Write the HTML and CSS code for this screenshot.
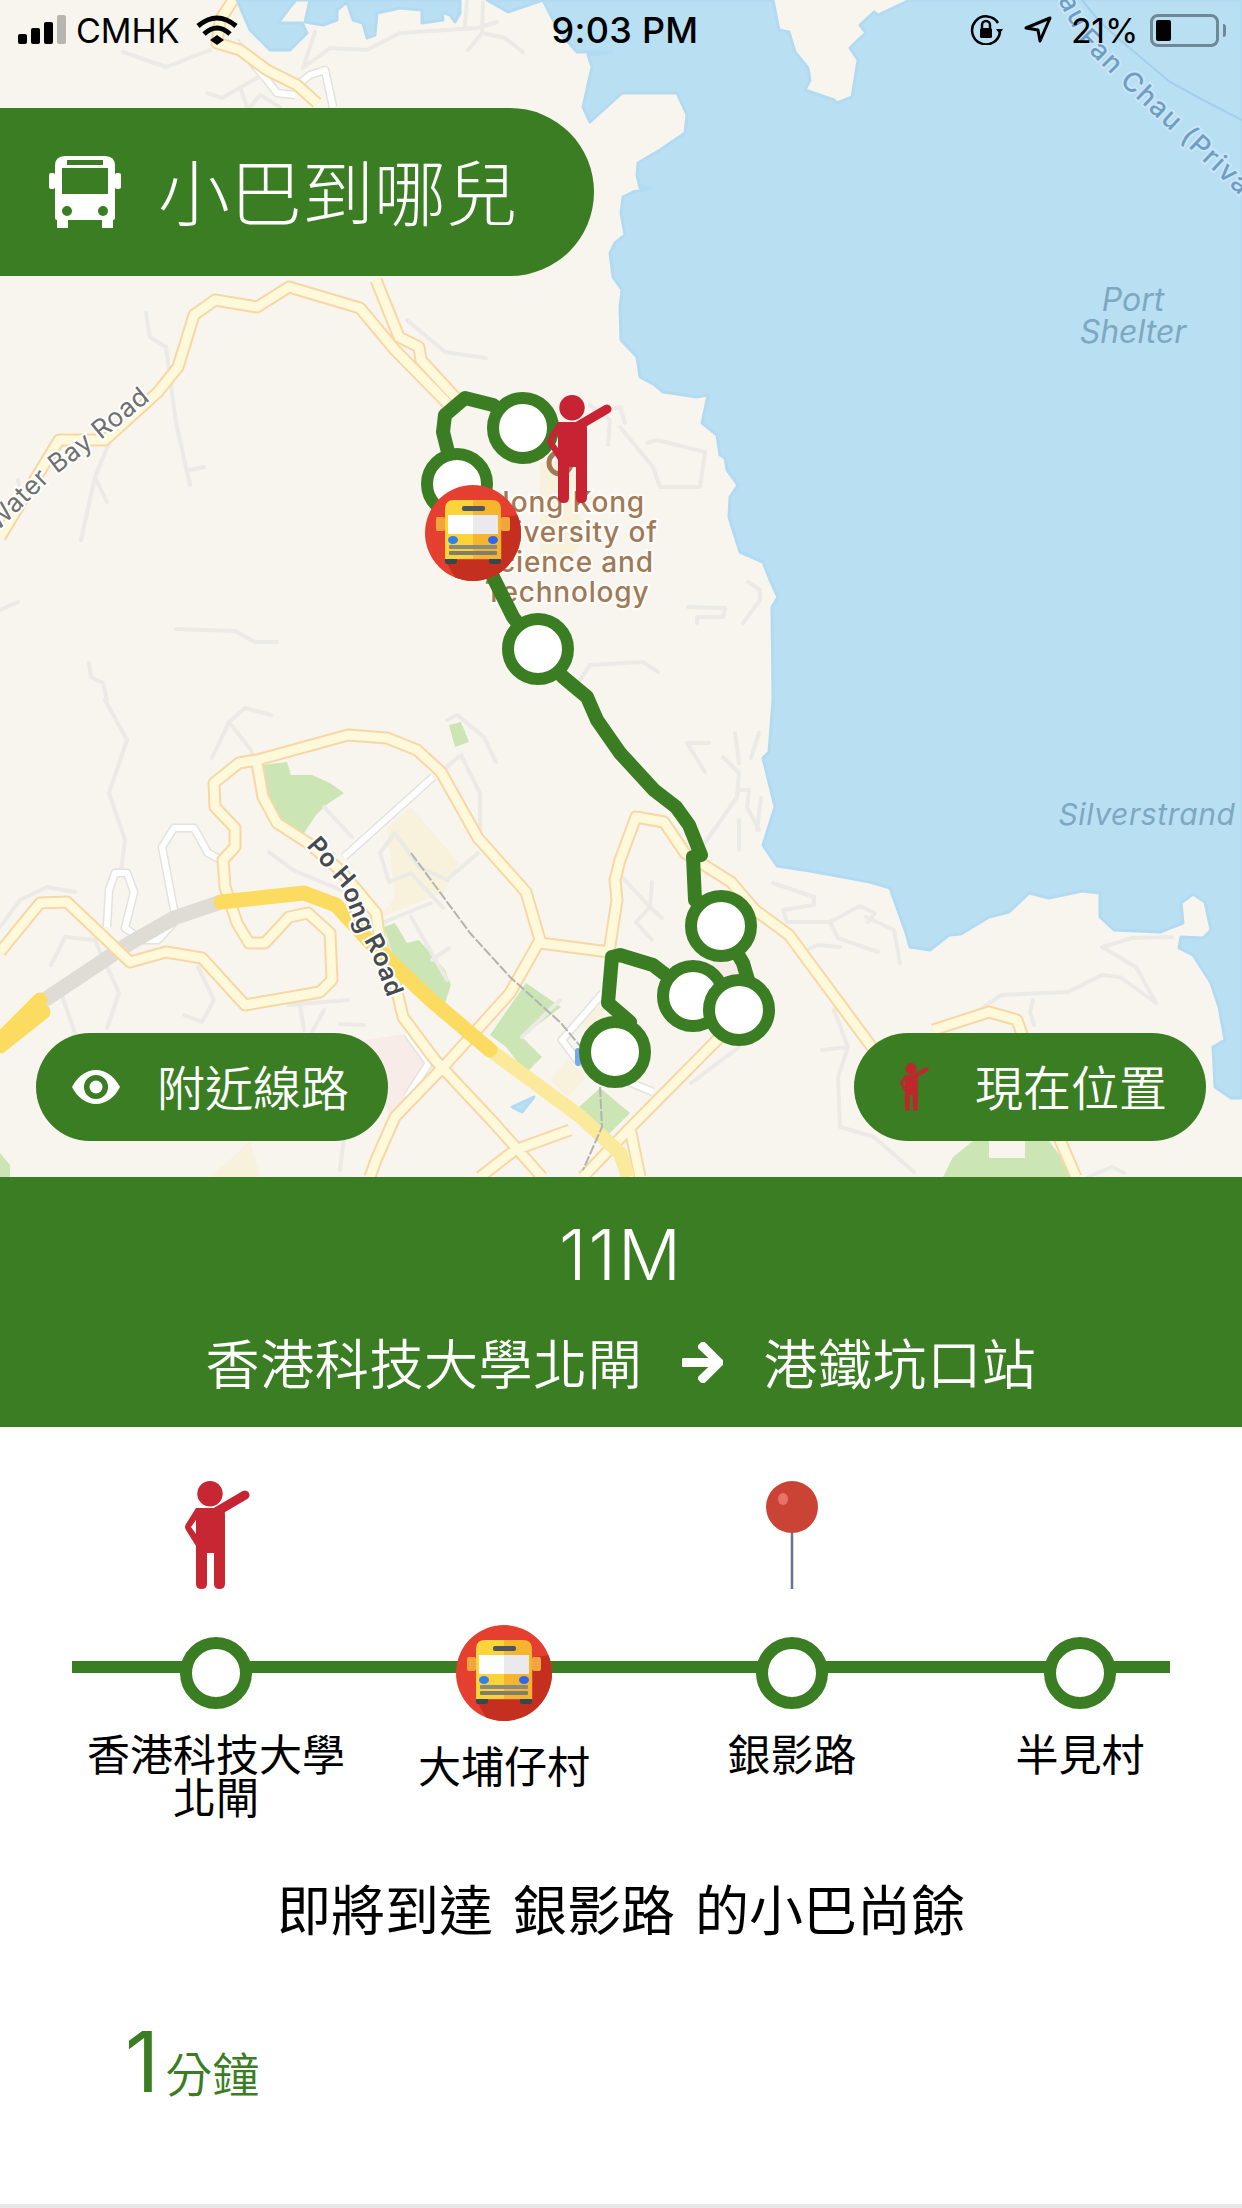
FILE: index.html
```html
<!DOCTYPE html>
<html lang="zh-Hant">
<head>
<meta charset="utf-8">
<title>小巴到哪兒</title>
<link rel="stylesheet" href="styles.css">
</head>
<body>
<svg class="defs" width="0" height="0" aria-hidden="true">
  <defs>
    <symbol id="person" viewBox="0 0 67 108">
      <circle cx="27" cy="12.7" r="12.7"/>
      <path d="M33 31 62 14" class="person-arm"/>
      <path fill-rule="evenodd" d="M13 27H39Q42 28 42 34V103Q42 108 36.500 108 31 108 31 103V72H24V103Q24 108 18.500 108 13 108 13 103V65L3 49Q1 46 3 43ZM13 39 8 46 13 53Z"/>
    </symbol>
    <clipPath id="bus-disc"><circle cx="48" cy="48" r="48"/></clipPath>
    <symbol id="bus" viewBox="0 0 96 96">
      <g clip-path="url(#bus-disc)">
        <rect width="96" height="96" fill="#e53f30"/>
        <path d="M48 75H77V32L96 30V96H32L20 75Z" fill="#c42f1f"/>
      </g>
      <rect x="11" y="32" width="9" height="14" rx="2" fill="#f2a53c"/>
      <rect x="76" y="32" width="9" height="14" rx="2" fill="#f2a53c"/>
      <rect x="20" y="71" width="12" height="8" rx="2" fill="#37474f"/>
      <rect x="64" y="71" width="12" height="8" rx="2" fill="#37474f"/>
      <path d="M20 24Q20 15 29 15H48V74H20Z" fill="#fbd43a"/>
      <path d="M76 24Q76 15 67 15H48V74H76Z" fill="#f5b52f"/>
      <rect x="37" y="21" width="23" height="5" rx="2" fill="#4d5560"/>
      <rect x="23" y="30" width="25" height="19" fill="#fff"/>
      <rect x="48" y="30" width="25" height="19" fill="#e9e9ee"/>
      <ellipse cx="28" cy="55" rx="5" ry="4" fill="#2f80ed"/>
      <ellipse cx="68" cy="55" rx="5" ry="4" fill="#2f66ed"/>
      <rect x="24" y="60" width="48" height="4" rx="1" fill="#8b8b7c"/>
      <rect x="24" y="66" width="48" height="4" rx="1" fill="#7d7d70"/>
    </symbol>
    <path id="white-roads" d="M221 860 208 853 194 828 174 828 162 847 176 920 158 940 142 940 125 928 134 892 127 873 115 873 109 890 107 927M433 777 344 857M407 1033 429 1063 407 1097M603 993 562 1040 577 1060 653 1092M235 42 267 80 277 93 295 95M300 83 310 75 325 70 333 107"/>
    <path id="roads" d="M0 952 40 903 67 902 130 962 166 952 202 958 245 1005 320 992 332 980 330 933 308 913 289 917 265 943 249 943 237 923 225 887 223 860 235 847 235 828 215 807 214 783 239 763 257 760 348 735 387 738 417 750 441 772 478 838 526 892 540 940 510 993 447 1063 395 1117 376 1160 370 1177M257 763 263 797 277 823 308 843 340 870 376 913 380 940 395 983 403 1017 435 1060 494 1123 542 1177M540 943 609 952 617 900 615 880 620 860 636 817 664 822 685 853 731 882 755 910 789 935 874 1050M933 1030 989 1012 1017 1020 1057 1133 1076 1177M583 1177 630 1128 720 1037M630 1128 640 1177M0 537 59 440 105 440 158 392 178 367 194 315 215 300 257 307 289 287 360 308 395 350 447 403M376 280 399 337 419 347 421 360 455 397M317 103 297 85 267 70 240 50 217 43 220 20 233 0M480 1177 515 1150 570 1130"/>
  </defs>
</svg>

<main class="app">
  <section class="map">
    <svg class="map-art" viewBox="0 0 1242 1177" width="1242" height="1177" role="img" aria-label="路線地圖">
      <rect class="land" width="1242" height="1177"/>
      <g class="water">
        <path d="M237 0 250 30 270 50 290 50 307 33 302 23 278 23 290 7 296 0 310 0 305 22 323 25 337 20 337 10 347 2 353 20 363 23 367 38 375 35 377 13 400 8 422 10 422 23 443 20 442 12 450 15 455 22 460 13 460 0Z"/>
        <path d="M487 0 508 12 543 0Z"/>
        <path d="M543 0 560 33 577 52 612 52 588 55 592 67 583 107 590 122 622 93 677 93 687 115 685 133 660 150 638 163 637 175 640 188 652 188 633 192 623 197 621 213 625 235 615 243 610 253 613 277 622 290 620 307 621 340 637 357 640 377 655 385 663 392 697 397 708 395 702 423 717 435 720 455 725 458 727 470 738 485 730 497 729 517 740 552 763 562 770 580 778 597 772 607 773 700 769 752 763 758 775 807 763 845 777 866 810 871 870 882 890 888 906 933 910 947 930 950 949 935 961 934 989 917 1009 912 1029 893 1049 898 1082 891 1100 893 1100 917 1114 930 1160 932 1183 923 1181 903 1193 894 1205 902 1211 930 1203 938 1181 937 1179 948 1193 955 1211 983 1219 1007 1225 1040 1213 1047 1215 1087 1231 1098 1242 1098 1242 0 910 0 878 15 874 12 860 25 866 33 858 40 850 48 858 60 852 97 837 103 834 100 805 90 810 80 808 68 795 52 789 32 779 30 773 0Z"/>
        <path d="M512 1107 534 1097 522 1112Z"/>
        <path d="M608 1110 617 1112 613 1120 608 1120Z"/>
      </g>
      <path class="water-line" d="M1082 0 1100 22 1120 40 1170 82 1203 100 1242 120"/>
      <g class="park">
        <path d="M263 765 287 762 291 775 312 775 330 783 344 793 326 805 316 815 304 833 277 820 263 797Z"/>
        <path d="M449 725 461 722 469 742 455 747Z"/>
        <path d="M384 927 395 923 407 943 419 940 445 970 451 985 445 1003 431 1002 395 963Z"/>
        <path d="M526 983 561 1007 522 1037 542 1057 526 1073 506 1047 490 1035Z"/>
        <path d="M578 1108 600 1088 630 1113 608 1135Z"/>
        <path d="M0 1153 10 1165 10 1177 0 1177Z"/>
        <path d="M943 1177 953 1157 973 1141 989 1141 989 1158 1025 1158 1025 1141 1049 1141 1076 1177Z"/>
        <path d="M674 1003 695 1020 680 1030 666 1015Z"/>
      </g>
      <g class="campus">
        <path d="M411 807 459 863 443 893 380 917 395 897 387 828Z"/>
        <path d="M550 1080 568 1060 587 1077 568 1097Z"/>
        <path d="M583 1020 598 1007 620 1030 590 1050Z"/>
        <path d="M540 462 578 462 582 540 560 575 540 555Z"/>
        <path d="M210 1177 235 1155 250 1140 260 1177Z"/>
      </g>
      <path class="hospital" d="M364 1040 411 1033 427 1060 395 1120 380 1100Z"/>
      <path class="hospital" d="M715 960 745 965 735 985 705 975Z"/>
      <g class="path-minor">
        <path d="M105 700 127 740 109 793 125 840 121 870"/>
        <path d="M271 715 245 708 229 722 251 750 253 758M229 722 212 758"/>
        <path d="M0 927 20 900 47 887 75 892"/>
        <path d="M51 965 65 937 95 940 119 993 107 1028M73 977 61 993 75 1033"/>
        <path d="M198 967 214 1000 202 1022 184 1015"/>
        <path d="M289 1005 348 1000M300 1005 304 1030M324 1010 312 1032M340 1024 364 1025"/>
        <path d="M269 852 293 870 348 893M324 807 352 837"/>
        <path d="M447 720 457 715 484 737 496 762M443 770 461 755 480 793 480 833"/>
        <path d="M380 853 395 833 419 867 447 880 478 853M380 853 389 882 411 873 443 908"/>
        <path d="M382 923 431 903M411 917 447 980M449 948 432 960"/>
        <path d="M146 313 150 337 166 347 176 423 190 485M190 470 204 467"/>
        <path d="M18 480 22 505M81 540 95 477 109 443M95 477 107 502M0 610 18 602"/>
        <path d="M176 629 235 631 255 642 277 642"/>
        <path d="M89 663 91 677 103 683 107 700"/>
        <path d="M407 320 445 352 486 358"/>
        <path d="M610 410 620 407 625 423M590 405 610 420 608 445M620 427 653 467 660 487 700 487 705 452 697 450 657 440 647 443"/>
        <path d="M580 680 590 665 643 662 658 672"/>
        <path d="M688 607 725 608 723 617 697 617 697 623M748 582 760 590 760 600 743 623"/>
        <path d="M705 772 687 743 709 743M723 757 739 773 737 797 705 843M759 733 751 758M735 733 739 763M741 790 749 790 747 807 759 830M761 798 757 830M739 820 739 850"/>
        <path d="M622 877 650 907 662 918M652 882 650 907 636 922 652 940"/>
        <path d="M773 883 814 897 814 905 783 910 787 922 830 922 838 938 878 952M830 922 860 906 875 913 868 922M866 917 894 930 900 963M806 950 818 945 840 947"/>
        <path d="M822 1050 848 1047 838 1077 840 1127 874 1137 914 1172M834 1010 848 1047"/>
        <path d="M691 1083 739 1047M692 1060 720 1035"/>
        <path d="M977 1012 1001 995 1068 992 1102 975 1120 977 1156 1003 1136 967 1102 947 1132 938 1172 937"/>
        <path d="M1033 1000 1030 1012 1034 1025"/>
        <path d="M1088 1177 1112 1167 1124 1173"/>
        <path d="M315 32 303 68 330 48 367 50 400 33 477 28 497 22M467 0 465 27M483 3 482 33 468 50M482 33 505 38 523 52"/>
        <path d="M207 93 222 98 257 78M240 87 247 107M250 107 260 95 280 107"/>
        <path d="M123 52 166 67 210 50"/>
        <path d="M340 1170 345 1130"/>
        <path d="M522 1037 560 1000M617 1015 640 1040"/>
      </g>
      <use href="#white-roads" class="path-white-casing"/>
      <use href="#white-roads" class="path-white"/>
      <path class="expressway" d="M221 902 174 918 130 943 40 1003"/>
      <use href="#roads" class="road-casing"/>
      <use href="#roads" class="road-fill"/>
      <path class="highway-pale" d="M490 1050 581 1117 620 1153 628 1177"/>
      <path class="highway" d="M221 902 304 893 336 905 368 940 399 970 431 1000 490 1050"/>
      <path class="highway" d="M0 1040 40 1000M0 1046 43 1012"/>
      <path class="rail" d="M411 853 470 933 510 977 561 1023 600 1070M600 1087 602 1127 583 1170"/>
      <rect class="bus-stop-mark" x="575" y="1048" width="6" height="18" rx="3"/>

      <g class="label-water-small">
        <text class="label-port" x="1133" y="311">Port</text>
        <text class="label-port" x="1133" y="343">Shelter</text>
        <text class="label-silver" x="1147" y="825">Silverstrand</text>
      </g>
      <path id="chau-line" class="guide" d="M1050 -15 1082 45 1122 85 1252 207"/>
      <text class="label-chau"><textPath href="#chau-line">Tau Fan Chau (Private</textPath></text>
      <path id="water-bay-line" class="guide" d="M-3 532 52 478 95 445 160 392"/>
      <text class="label-road"><textPath href="#water-bay-line">Water Bay Road</textPath></text>
      <path id="po-hong-line" class="guide" d="M306 846 340 885 358 930 372 955 390 1004"/>
      <text class="label-road-strong"><textPath href="#po-hong-line">Po Hong Road</textPath></text>
      <circle class="campus-mark" cx="560" cy="463" r="11"/>
      <g class="label-campus">
        <text x="567" y="512">Hong Kong</text>
        <text x="567" y="542">University of</text>
        <text x="567" y="572">Science and</text>
        <text x="567" y="602">Technology</text>
      </g>

      <path class="route" d="M523 428 493 405 465 398 445 415 443 432 448 452 457 484 473 533 493 577 513 617 538 649 563 677 587 697 597 720 620 753 654 790 676 807 689 825 701 855 693 857 695 900 721 926 743 963 748 980 739 1010 693 996 653 965 620 955 612 957 608 1003 630 1022 615 1052"/>
      <circle class="marker" cx="523" cy="428" r="30"/>
      <circle class="marker" cx="457" cy="484" r="30"/>
      <circle class="marker" cx="538" cy="649" r="30"/>
      <circle class="marker" cx="721" cy="926" r="30"/>
      <circle class="marker" cx="693" cy="996" r="30"/>
      <circle class="marker" cx="739" cy="1010" r="30"/>
      <circle class="marker" cx="615" cy="1052" r="30"/>
      <use href="#person" class="person-map" x="545" y="395" width="67" height="108"/>
      <use href="#bus" x="425" y="485" width="96" height="96"/>
    </svg>

    <div class="status">
      <div class="status-left">
        <svg class="signal" viewBox="0 0 48 30" width="48" height="30" aria-hidden="true">
          <rect x="0" y="19" width="9" height="10" rx="2"/>
          <rect x="13" y="13" width="9" height="16" rx="2"/>
          <rect x="26" y="7" width="9" height="22" rx="2"/>
          <rect class="signal-off" x="39" y="0" width="9" height="29" rx="2"/>
        </svg>
        <span class="carrier">CMHK</span>
        <svg class="wifi" viewBox="0 0 42 30" width="42" height="30" aria-hidden="true">
          <path d="M2 11Q21-5 40 11M8 19Q21 7 34 19"/>
          <path class="wifi-dot" d="M14 25 21 20 28 25 21 30Z"/>
        </svg>
      </div>
      <div class="status-time">9:03 PM</div>
      <div class="status-right">
        <svg class="rotation" viewBox="0 0 34 30" width="34" height="30" aria-hidden="true">
          <path d="M31 17A14 14 0 1 1 29 8"/>
          <path class="solid" d="M27 14H34L30.500 19Z"/>
          <path d="M13 13V10A4 4 0 0 1 21 10V13"/>
          <rect class="solid" x="11" y="13" width="12" height="10" rx="1.500"/>
        </svg>
        <svg class="locate" viewBox="0 0 30 30" width="30" height="30" aria-hidden="true">
          <path d="M3 13 27 3 17 26 15 15Z"/>
        </svg>
        <span class="battery-pct">21%</span>
        <span class="battery"><span class="battery-level"></span></span>
        <span class="battery-nub"></span>
      </div>
    </div>

    <header class="brand">
      <svg class="brand-icon" viewBox="0 0 72 72" width="72" height="72" aria-hidden="true">
        <path fill-rule="evenodd" d="M6 10Q6 0 16 0H56Q66 0 66 10V62Q66 64 64 64V72H53V64H19V72H8V64Q6 64 6 62ZM18 4V9H54V4ZM13 12V38H59V12ZM18 50A5 5 0 1 0 18 60 5 5 0 1 0 18 50ZM54 50A5 5 0 1 0 54 60 5 5 0 1 0 54 50Z"/>
        <rect x="0" y="17" width="6" height="16" rx="2"/>
        <rect x="66" y="17" width="6" height="16" rx="2"/>
      </svg>
      <h1 class="brand-title">小巴到哪兒</h1>
    </header>

    <div class="map-actions">
      <button class="action action-nearby" type="button">
        <svg class="eye" viewBox="0 0 48 34" width="48" height="34" aria-hidden="true">
          <path fill-rule="evenodd" d="M0 17C5 7 14 0 24 0S43 7 48 17C43 27 34 34 24 34S5 27 0 17ZM24 5A12 12 0 1 0 24 29 12 12 0 1 0 24 5Z"/>
          <circle cx="24" cy="17" r="6.500"/>
        </svg>
        <span class="action-label">附近線路</span>
      </button>
      <button class="action action-locate" type="button">
        <svg class="person-small" width="30" height="48" aria-hidden="true"><use href="#person"/></svg>
        <span class="action-label">現在位置</span>
      </button>
    </div>
  </section>

  <section class="band">
    <div class="band-code">11M</div>
    <div class="band-route">
      <span>香港科技大學北閘</span>
      <svg class="arrow" viewBox="0 36 448 440" width="41" height="41" aria-hidden="true">
        <path d="M190.500 66.900l22.200-22.200c9.400-9.400 24.600-9.400 33.900 0L441 239c9.400 9.400 9.400 24.600 0 33.900L246.600 467.300c-9.400 9.400-24.600 9.400-33.900 0l-22.200-22.200c-9.500-9.500-9.300-25 .4-34.300L311.400 296H24c-13.300 0-24-10.700-24-24v-32c0-13.300 10.700-24 24-24h287.400L190.900 101.200c-9.800-9.300-10-24.800-.4-34.300z"/>
      </svg>
      <span>港鐵坑口站</span>
    </div>
  </section>

  <section class="timeline">
    <div class="timeline-line"></div>
    <div class="stop">
      <div class="stop-icon">
        <svg class="person-large" width="67" height="108" aria-hidden="true"><use href="#person"/></svg>
      </div>
      <div class="stop-node"><span class="stop-ring"></span></div>
      <div class="stop-label">香港科技大學北閘</div>
    </div>
    <div class="stop stop-bus">
      <div class="stop-icon"></div>
      <div class="stop-node">
        <svg width="96" height="96" aria-hidden="true"><use href="#bus"/></svg>
      </div>
      <div class="stop-label">大埔仔村</div>
    </div>
    <div class="stop">
      <div class="stop-icon">
        <svg class="pin" viewBox="0 0 52 108" width="52" height="108" aria-hidden="true">
          <rect class="pin-needle" x="24.750" y="50" width="2.500" height="58"/>
          <circle class="pin-head" cx="26" cy="26" r="26"/>
          <ellipse class="pin-shine" cx="17" cy="18" rx="5" ry="6"/>
        </svg>
      </div>
      <div class="stop-node"><span class="stop-ring"></span></div>
      <div class="stop-label">銀影路</div>
    </div>
    <div class="stop">
      <div class="stop-icon"></div>
      <div class="stop-node"><span class="stop-ring"></span></div>
      <div class="stop-label">半見村</div>
    </div>
  </section>

  <p class="notice">即將到達 銀影路 的小巴尚餘</p>

  <div class="eta"><span class="eta-value">1</span><span class="eta-unit">分鐘</span></div>

  <div class="home-edge"></div>
</main>
</body>
</html>
```

FILE: styles.css
```css
* { box-sizing: border-box; }

html, body {
  margin: 0;
  padding: 0;
  background: #fff;
}

body {
  font-family: "Noto Sans CJK TC", "Noto Sans", sans-serif;
  font-weight: 300;
  color: #000;
}

.defs { position: absolute; }

.app {
  width: 1242px;
  height: 2208px;
  position: relative;
  overflow: hidden;
  display: flex;
  flex-direction: column;
}

/* ---------- map ---------- */
.map {
  position: relative;
  height: 1177px;
  flex: none;
  background: #f8f5ef;
}

.map-art { position: absolute; left: 0; top: 0; display: block; }

.land { fill: #f8f5ef; }
.water path { fill: #b9dff3; stroke: #b2dbf1; stroke-width: 3; stroke-linejoin: round; }
.water-line { fill: none; stroke: #a3cfec; stroke-width: 2; }
.park path { fill: #cbe5b5; }
.campus path { fill: #f8f1dc; }
.hospital { fill: #f8ece8; }
.campus-mark { fill: none; stroke: #a17a55; stroke-width: 5; }

.path-minor path { fill: none; stroke: #ebeae6; stroke-width: 4; stroke-linejoin: round; stroke-linecap: round; }
.path-white-casing { fill: none; stroke: #e4e2dd; stroke-width: 9; stroke-linejoin: round; }
.path-white { fill: none; stroke: #fff; stroke-width: 6; stroke-linejoin: round; }
.expressway { fill: none; stroke: #dfdcd6; stroke-width: 15; stroke-linejoin: round; }
.road-casing { fill: none; stroke: #f7d7a6; stroke-width: 13; stroke-linejoin: round; }
.road-fill { fill: none; stroke: #fff9dc; stroke-width: 9; stroke-linejoin: round; }
.highway { fill: none; stroke: #fbdc60; stroke-width: 15; stroke-linejoin: round; stroke-linecap: round; }
.highway-pale { fill: none; stroke: #fbe99c; stroke-width: 14; stroke-linejoin: round; }
.rail { fill: none; stroke: #b3b3b0; stroke-width: 2; stroke-dasharray: 10 2; }
.bus-stop-mark { fill: #76a8ef; }
.guide { fill: none; stroke: none; }

.label-port, .label-silver {
  font-family: "Inter", sans-serif;
  font-style: italic;
  font-weight: 400;
  fill: #7da8c1;
  text-anchor: middle;
}
.label-port { font-size: 32px; }
.label-silver { font-size: 30px; letter-spacing: .6px; }

.label-chau {
  font-family: "Inter", sans-serif;
  font-size: 27px;
  font-weight: 500;
  fill: #6f9ec4;
  letter-spacing: 1.5px;
  stroke: #c9e6f7;
  stroke-width: 4px;
  paint-order: stroke;
}

.label-road, .label-road-strong {
  font-family: "Inter", sans-serif;
  stroke: #fff;
  stroke-width: 4px;
  paint-order: stroke;
}
.label-road { font-size: 26px; fill: #6f6f6f; font-weight: 400; letter-spacing: .6px; }
.label-road-strong { font-size: 25px; fill: #454a50; font-weight: 600; letter-spacing: .4px; }

.label-campus text {
  font-family: "Inter", sans-serif;
  font-size: 28px;
  font-weight: 500;
  letter-spacing: .8px;
  fill: #a17a55;
  text-anchor: middle;
  stroke: #fff;
  stroke-width: 4px;
  stroke-opacity: .8;
  paint-order: stroke;
}

.route { fill: none; stroke: #3a7d22; stroke-width: 14; stroke-linejoin: round; stroke-linecap: round; }
.marker { fill: #fff; stroke: #3a7d22; stroke-width: 12; }
.person-map { fill: #c82333; }
.person-arm { fill: none; stroke: #c82333; stroke-width: 9; stroke-linecap: round; }

/* ---------- status bar ---------- */
.status {
  position: relative;
  height: 60px;
  padding: 0 16px 0 18px;
  display: grid;
  grid-template-columns: 1fr auto 1fr;
  align-items: center;
  font-family: "Inter", sans-serif;
  font-size: 34px;
  font-weight: 400;
  color: #000;
}

.status-left, .status-right { display: flex; align-items: center; }
.status-right { justify-content: flex-end; }
.status-time { font-weight: 500; font-size: 36px; letter-spacing: .3px; margin-left: 6px; }

.signal { fill: #000; margin-right: 10px; }
.signal-off { fill: #b6b5b0; }
.carrier { letter-spacing: 0; }
.wifi { margin-left: 16px; fill: none; stroke: #000; stroke-width: 5; }
.wifi-dot { fill: #000; stroke: none; }

.rotation { fill: none; stroke: #000; stroke-width: 2.500; margin-right: 20px; }
.rotation .solid { fill: #000; stroke: none; }
.locate { fill: none; stroke: #000; stroke-width: 3; stroke-linejoin: round; margin-right: 18px; }
.battery-pct { margin-right: 12px; letter-spacing: -.3px; }
.battery {
  width: 69px;
  height: 33px;
  border: 3px solid #6f8797;
  border-radius: 8px;
  padding: 3px;
  display: block;
}
.battery-level { display: block; width: 15px; height: 100%; background: #000; border-radius: 2px; }
.battery-nub {
  width: 3px;
  height: 13px;
  margin-left: 4px;
  background: #6f8797;
  border-radius: 0 3px 3px 0;
}

/* ---------- brand pill ---------- */
.brand {
  position: relative;
  margin-top: 48px;
  width: 594px;
  height: 168px;
  padding-left: 49px;
  display: flex;
  align-items: center;
  gap: 37px;
  background: #3a7d22;
  border-radius: 0 84px 84px 0;
  color: #fff;
}
.brand-icon { fill: #fff; flex: none; }
.brand-title { margin: 0 0 6px; font-size: 72px; font-weight: 300; line-height: 1; }

/* ---------- map buttons ---------- */
.map-actions {
  position: absolute;
  left: 36px;
  right: 36px;
  bottom: 36px;
  display: flex;
  justify-content: space-between;
}
.action {
  width: 352px;
  height: 108px;
  border: 0;
  border-radius: 54px;
  background: #3a7d22;
  color: #fff;
  display: flex;
  align-items: center;
  font: inherit;
  font-size: 48px;
  font-weight: 350;
  line-height: 1;
  padding: 0;
}
.action-label { margin-bottom: 5px; }
.action-nearby { padding-left: 36px; gap: 37px; }
.action-locate { padding-left: 45px; gap: 46px; }
.eye { fill: #fff; flex: none; }
.person-small { flex: none; fill: #bf272d; }

/* ---------- green band ---------- */
.band {
  flex: none;
  height: 250px;
  background: #3a7d22;
  color: #fff;
  display: flex;
  flex-direction: column;
  align-items: center;
  padding-top: 32px;
}
.band-code {
  font-family: "Inter", sans-serif;
  font-size: 70px;
  font-weight: 300;
  line-height: 92px;
  letter-spacing: 2px;
}
.band-route {
  display: flex;
  align-items: center;
  gap: 40px;
  margin-top: 25px;
  font-size: 54px;
  font-weight: 350;
  line-height: 72px;
  letter-spacing: .6px;
}
.arrow { fill: #fff; stroke: #fff; stroke-width: 20; flex: none; }

/* ---------- timeline ---------- */
.timeline {
  position: relative;
  flex: none;
  height: 445px;
  padding: 54px 0 0 72px;
  display: grid;
  grid-template-columns: repeat(4, 288px);
}
.timeline-line {
  position: absolute;
  left: 72px;
  top: 234px;
  width: 1098px;
  height: 12px;
  background: #3a7d22;
}
.stop {
  position: relative;
  display: flex;
  flex-direction: column;
  align-items: center;
}
.stop-icon { height: 108px; margin-bottom: 36px; }
.stop-icon svg { display: block; }
.person-large { fill: #c62733; }
.stop-node { height: 96px; display: flex; align-items: center; justify-content: center; }
.stop-node svg { display: block; }
.stop-ring {
  display: block;
  width: 72px;
  height: 72px;
  border: 12px solid #3a7d22;
  border-radius: 50%;
  background: #fff;
}
.stop-label {
  width: 264px;
  margin-top: 10px;
  font-size: 43px;
  font-weight: 400;
  line-height: 43px;
  text-align: center;
  color: #000;
}
.stop-bus .stop-label { margin-top: 22px; }
.pin-needle { fill: #6b7390; }
.pin-head { fill: #cb4335; }
.pin-shine { fill: #e8736a; }

/* ---------- notice + eta ---------- */
.notice {
  margin: 0;
  flex: none;
  text-align: center;
  font-size: 54px;
  font-weight: 400;
  line-height: 72px;
  word-spacing: 8px;
  color: #000;
}
.eta {
  flex: none;
  margin-top: 76px;
  padding-left: 125px;
  display: flex;
  align-items: baseline;
  color: #3a7d22;
  line-height: 1;
}
.eta-value { font-family: "Inter", sans-serif; font-size: 84px; font-weight: 400; }
.eta-unit { font-size: 47px; margin-left: 6px; font-weight: 350; }

.home-edge {
  position: absolute;
  left: 0;
  right: 0;
  bottom: 0;
  height: 4px;
  background: #e8e8e8;
}
```
